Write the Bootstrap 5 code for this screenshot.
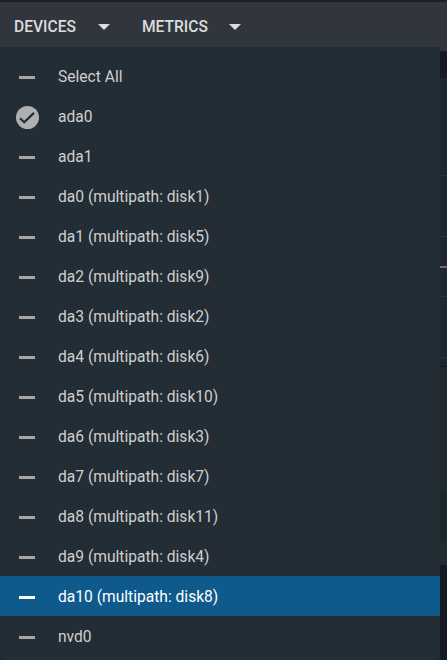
<!doctype html>
<html lang="en">
<head>
<meta charset="utf-8">
<title>Devices</title>
<link href="https://cdn.jsdelivr.net/npm/bootstrap@5.3.0/dist/css/bootstrap.min.css" rel="stylesheet">
<style>
html,body{height:660px;overflow:hidden}
body{background:#1e2830;font-family:Roboto,"Liberation Sans",sans-serif;font-size:15.6px;color:#cfcfcf}
.topline{height:2px;background:#1b1f2a}
.hdr{height:45px;background:#31363e;padding-left:14px;padding-top:6px}
.hdr-btn{font-size:15.6px;font-weight:500;color:#dcdcdc;text-transform:uppercase;line-height:1}
.caret-down{width:0;height:0;border-left:6px solid transparent;border-right:6px solid transparent;border-top:6px solid #dcdcdc;margin-bottom:1px}
.c1{margin-left:22px;margin-right:32px}
.c2{margin-left:21px}
.body-row{height:613px}
.menu-panel{width:440px;background:#232d35;padding-top:9px;border-top-right-radius:4px}
.menu-item{height:40px;background:transparent;border:0;border-radius:0;padding:4px 0 0;color:#cfcfcf;font-size:15.6px}
.menu-item.sel{background:#0f5a8d;color:#fff}
.mark-slot{width:58px;flex:none}
.dash{width:16px;height:3px;background:#a6a6a6;margin-left:19px;margin-top:-1px}
.sel .dash{background:#fff}
.tick{margin-left:16px;display:block;margin-top:-2px}
.strip{width:7px;background:#1e2830}
.s-h{height:4px;background:#31363e}
.s-dark{height:27px;background:#141b25}
.s-a{height:97px;background:#1d272f}
.s-line{height:1px;background:#2b343b}
.s-b{height:60px;background:#1d272f}
.s-purple{height:2px;background:#7d5a8f}
.s-c{height:29px;background:#1d272f}
.s-c2{height:28px;background:#1d272f}
.s-e{height:8px;background:#1d272f}
.s-black{height:1px;background:#10151a}
.s-f{height:123px;background:#1f292f}
.s-g{height:53px;background:#1b252c}
.s-i{height:22px;background:#212b32}
.s-tail{flex:1 1 auto;background:#141b25}
</style>
</head>
<body>
<div class="topline"></div>
<div class="hdr d-flex align-items-center">
  <span class="hdr-btn">Devices</span><span class="caret-down c1"></span>
  <span class="hdr-btn">Metrics</span><span class="caret-down c2"></span>
</div>
<div class="body-row d-flex">
  <div class="menu-panel list-group">
    <div class="list-group-item menu-item d-flex align-items-center"><span class="mark-slot"><span class="dash d-block"></span></span>Select All</div>
    <div class="list-group-item menu-item d-flex align-items-center"><span class="mark-slot"><svg class="tick" width="23" height="23" viewBox="0 0 23 23"><circle cx="11.5" cy="11.5" r="11.5" fill="#b0b0b0"/><path d="M4 12.2l4.2 4.1 9.8-9.4" fill="none" stroke="#232d35" stroke-width="2.2"/></svg></span>ada0</div>
    <div class="list-group-item menu-item d-flex align-items-center"><span class="mark-slot"><span class="dash d-block"></span></span>ada1</div>
    <div class="list-group-item menu-item d-flex align-items-center"><span class="mark-slot"><span class="dash d-block"></span></span>da0 (multipath: disk1)</div>
    <div class="list-group-item menu-item d-flex align-items-center"><span class="mark-slot"><span class="dash d-block"></span></span>da1 (multipath: disk5)</div>
    <div class="list-group-item menu-item d-flex align-items-center"><span class="mark-slot"><span class="dash d-block"></span></span>da2 (multipath: disk9)</div>
    <div class="list-group-item menu-item d-flex align-items-center"><span class="mark-slot"><span class="dash d-block"></span></span>da3 (multipath: disk2)</div>
    <div class="list-group-item menu-item d-flex align-items-center"><span class="mark-slot"><span class="dash d-block"></span></span>da4 (multipath: disk6)</div>
    <div class="list-group-item menu-item d-flex align-items-center"><span class="mark-slot"><span class="dash d-block"></span></span>da5 (multipath: disk10)</div>
    <div class="list-group-item menu-item d-flex align-items-center"><span class="mark-slot"><span class="dash d-block"></span></span>da6 (multipath: disk3)</div>
    <div class="list-group-item menu-item d-flex align-items-center"><span class="mark-slot"><span class="dash d-block"></span></span>da7 (multipath: disk7)</div>
    <div class="list-group-item menu-item d-flex align-items-center"><span class="mark-slot"><span class="dash d-block"></span></span>da8 (multipath: disk11)</div>
    <div class="list-group-item menu-item d-flex align-items-center"><span class="mark-slot"><span class="dash d-block"></span></span>da9 (multipath: disk4)</div>
    <div class="list-group-item menu-item sel d-flex align-items-center"><span class="mark-slot"><span class="dash d-block"></span></span>da10 (multipath: disk8)</div>
    <div class="list-group-item menu-item d-flex align-items-center"><span class="mark-slot"><span class="dash d-block"></span></span>nvd0</div>
  </div>
  <div class="strip d-flex flex-column">
    <div class="s-h"></div><div class="s-dark"></div><div class="s-a"></div><div class="s-line"></div><div class="s-b"></div><div class="s-line"></div><div class="s-c"></div><div class="s-purple"></div><div class="s-c2"></div><div class="s-line"></div><div class="s-b"></div><div class="s-line"></div><div class="s-e"></div><div class="s-black"></div><div class="s-f"></div><div class="s-g"></div><div class="s-i"></div><div class="s-tail"></div>
  </div>
</div>
<script src="https://cdn.jsdelivr.net/npm/bootstrap@5.3.0/dist/js/bootstrap.bundle.min.js"></script>
</body>
</html>
